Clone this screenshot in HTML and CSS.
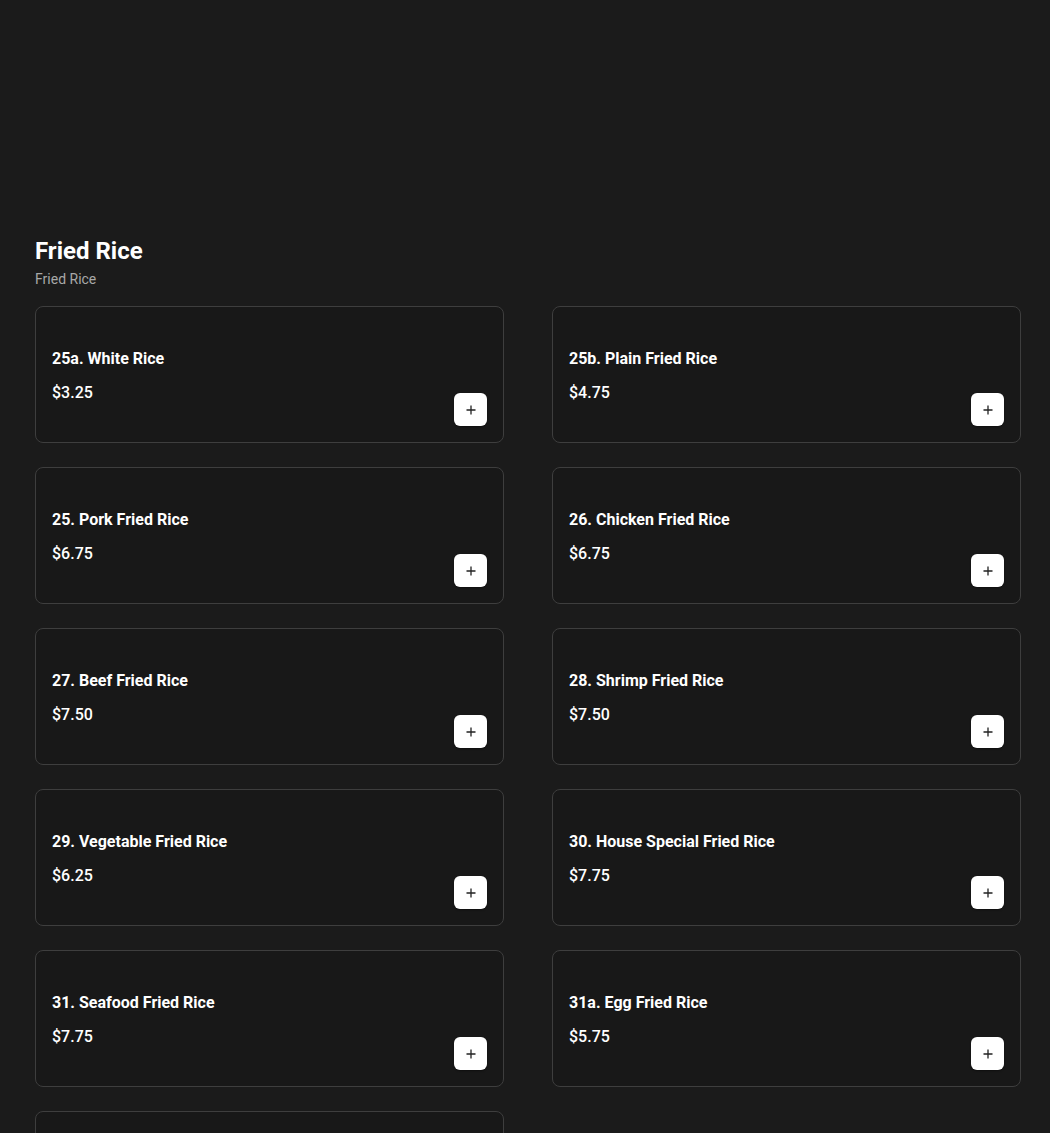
FILE: index.html
```html
<!DOCTYPE html>
<html>
<head>
<meta charset="utf-8">
<link rel="stylesheet" href="styles.css">
</head>
<body>
<main class="page">
  <section class="category">
    <h2 class="cat-title">Fried Rice</h2>
    <p class="cat-sub">Fried Rice</p>
    <div class="grid">
      <div class="card"><div class="info"><div class="name">25a. White Rice</div><div class="price">$3.25</div></div><button class="add"><svg viewBox="0 0 12 12" width="12" height="12"><path d="M6 1.5v9M1.5 6h9" stroke="#222" stroke-width="1.3"/></svg></button></div>
      <div class="card"><div class="info"><div class="name">25b. Plain Fried Rice</div><div class="price">$4.75</div></div><button class="add"><svg viewBox="0 0 12 12" width="12" height="12"><path d="M6 1.5v9M1.5 6h9" stroke="#222" stroke-width="1.3"/></svg></button></div>
      <div class="card"><div class="info"><div class="name">25. Pork Fried Rice</div><div class="price">$6.75</div></div><button class="add"><svg viewBox="0 0 12 12" width="12" height="12"><path d="M6 1.5v9M1.5 6h9" stroke="#222" stroke-width="1.3"/></svg></button></div>
      <div class="card"><div class="info"><div class="name">26. Chicken Fried Rice</div><div class="price">$6.75</div></div><button class="add"><svg viewBox="0 0 12 12" width="12" height="12"><path d="M6 1.5v9M1.5 6h9" stroke="#222" stroke-width="1.3"/></svg></button></div>
      <div class="card"><div class="info"><div class="name">27. Beef Fried Rice</div><div class="price">$7.50</div></div><button class="add"><svg viewBox="0 0 12 12" width="12" height="12"><path d="M6 1.5v9M1.5 6h9" stroke="#222" stroke-width="1.3"/></svg></button></div>
      <div class="card"><div class="info"><div class="name">28. Shrimp Fried Rice</div><div class="price">$7.50</div></div><button class="add"><svg viewBox="0 0 12 12" width="12" height="12"><path d="M6 1.5v9M1.5 6h9" stroke="#222" stroke-width="1.3"/></svg></button></div>
      <div class="card"><div class="info"><div class="name">29. Vegetable Fried Rice</div><div class="price">$6.25</div></div><button class="add"><svg viewBox="0 0 12 12" width="12" height="12"><path d="M6 1.5v9M1.5 6h9" stroke="#222" stroke-width="1.3"/></svg></button></div>
      <div class="card"><div class="info"><div class="name">30. House Special Fried Rice</div><div class="price">$7.75</div></div><button class="add"><svg viewBox="0 0 12 12" width="12" height="12"><path d="M6 1.5v9M1.5 6h9" stroke="#222" stroke-width="1.3"/></svg></button></div>
      <div class="card"><div class="info"><div class="name">31. Seafood Fried Rice</div><div class="price">$7.75</div></div><button class="add"><svg viewBox="0 0 12 12" width="12" height="12"><path d="M6 1.5v9M1.5 6h9" stroke="#222" stroke-width="1.3"/></svg></button></div>
      <div class="card"><div class="info"><div class="name">31a. Egg Fried Rice</div><div class="price">$5.75</div></div><button class="add"><svg viewBox="0 0 12 12" width="12" height="12"><path d="M6 1.5v9M1.5 6h9" stroke="#222" stroke-width="1.3"/></svg></button></div>
      <div class="card"><div class="info"><div class="name">32. Fried Rice</div><div class="price">$6.75</div></div><button class="add"><svg viewBox="0 0 12 12" width="12" height="12"><path d="M6 1.5v9M1.5 6h9" stroke="#222" stroke-width="1.3"/></svg></button></div>
    </div>
  </section>
</main>
</body>
</html>
```
FILE: styles.css
```css
html, body {
  margin: 0;
  padding: 0;
  background: #1b1b1b;
  color: #fff;
  font-family: Roboto, "Noto Sans", sans-serif;
}
.page {
  padding: 236px 29px 40px 35px;
}
.cat-title {
  margin: 0;
  font-size: 24px;
  font-weight: 700;
  line-height: 30px;
}
.cat-sub {
  margin: 3px 0 17px;
  font-size: 14px;
  line-height: 20px;
  color: #a8a8a8;
}
.grid {
  display: grid;
  grid-template-columns: 1fr 1fr;
  column-gap: 48px;
  row-gap: 24px;
}
.card {
  box-sizing: border-box;
  height: 137px;
  border: 1px solid #3e3e3e;
  border-radius: 8px;
  background: #181818;
  padding: 16px;
  display: flex;
  justify-content: space-between;
  align-items: flex-end;
}
.info {
  align-self: center;
  display: flex;
  flex-direction: column;
  gap: 10px;
  padding-top: 2px;
}
.name {
  font-size: 16px;
  font-weight: 700;
  line-height: 24px;
}
.price {
  font-size: 16px;
  font-weight: 500;
  line-height: 24px;
}
.add {
  width: 33px;
  height: 33px;
  border: none;
  border-radius: 6px;
  background: #fff;
  padding: 0;
  display: flex;
  align-items: center;
  justify-content: center;
  cursor: pointer;
  box-shadow: 0 1px 2px rgba(0, 0, 0, 0.4);
}
```
